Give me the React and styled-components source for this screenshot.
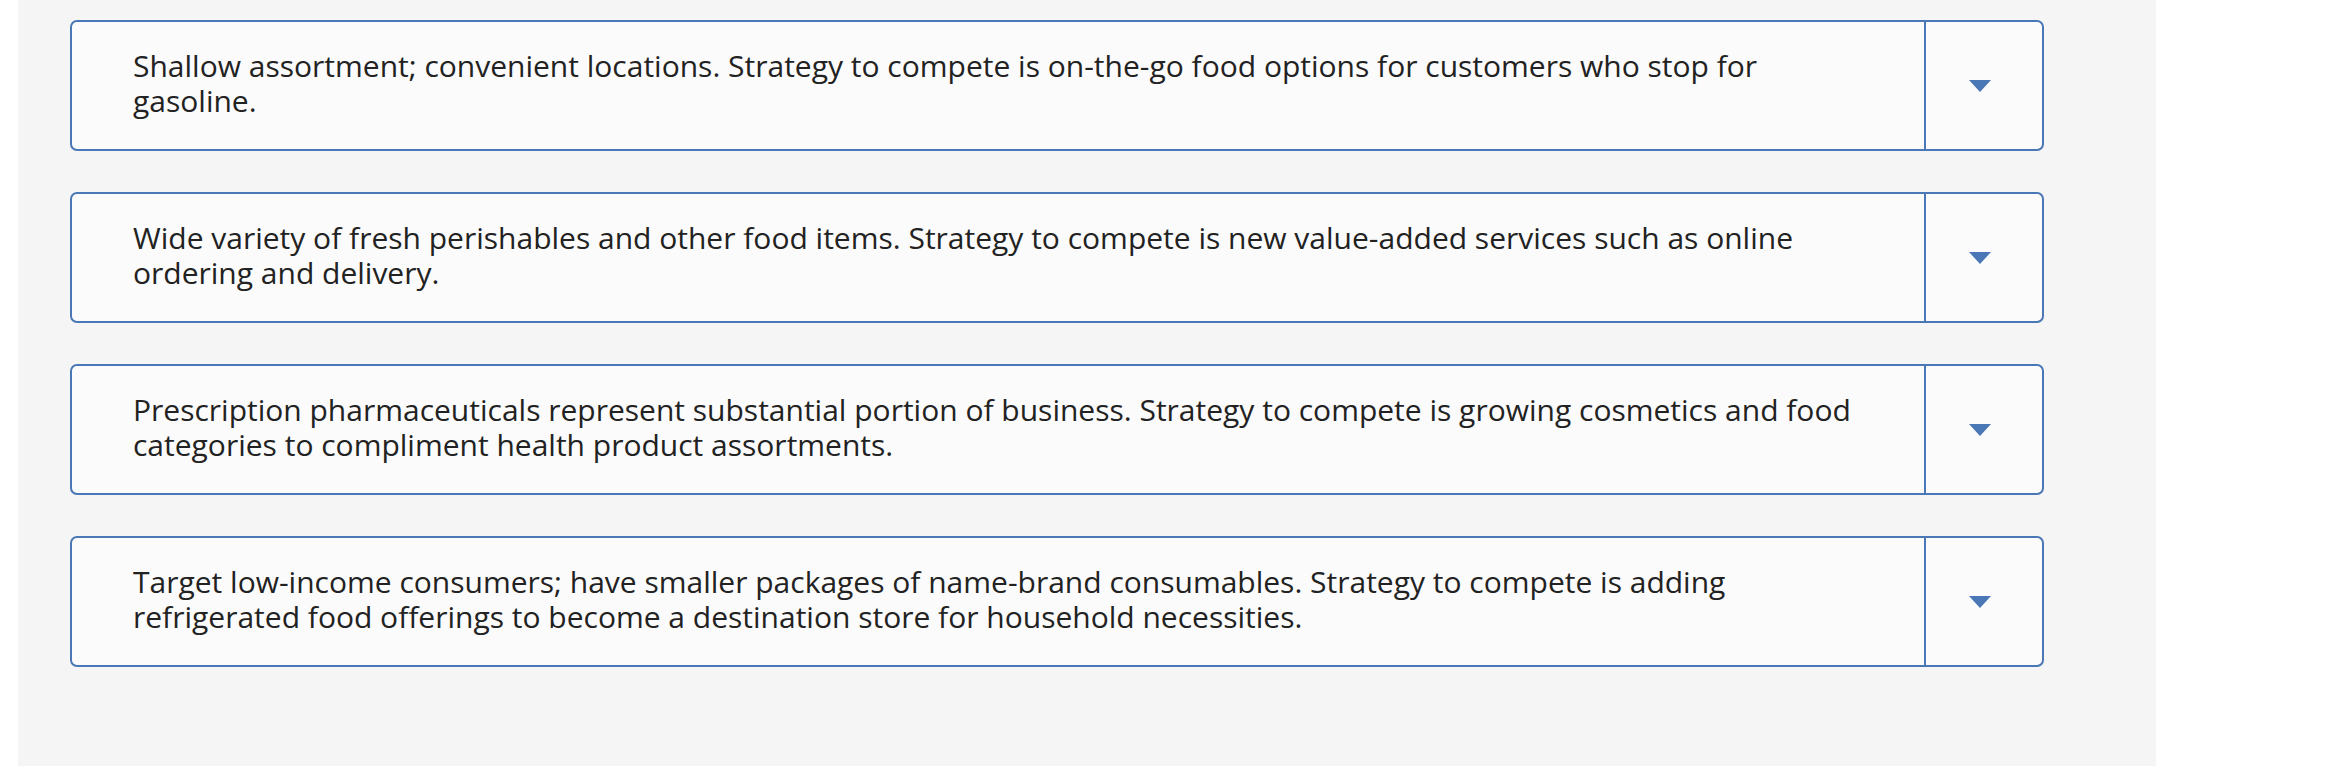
import React from 'react'
import styled, { createGlobalStyle } from 'styled-components'

const GlobalStyle = createGlobalStyle`
  html, body {
    margin: 0;
    padding: 0;
    background: #fff;
  }
  body {
    font-family: "Open Sans", Lato, sans-serif;
  }
`

const options = [
  'Shallow assortment; convenient locations. Strategy to compete is on-the-go food options for customers who stop for gasoline.',
  'Wide variety of fresh perishables and other food items. Strategy to compete is new value-added services such as online ordering and delivery.',
  'Prescription pharmaceuticals represent substantial portion of business. Strategy to compete is growing cosmetics and food categories to compliment health product assortments.',
  'Target low-income consumers; have smaller packages of name-brand consumables. Strategy to compete is adding refrigerated food offerings to become a destination store for household necessities.'
]

const Caret = () => (
  <svg width='22' height='12' viewBox='0 0 22 12'>
    <path d='M0 0 H22 L11 12 Z' fill='#4a77b5' />
  </svg>
)

const App = () => {
  return (
    <>
      <GlobalStyle />
      <StyledPanel>
        <StyledList>
          {options.map((text, i) => (
            <StyledSelect key={i}>
              <StyledText>{text}</StyledText>
              <StyledToggle>
                <Caret />
              </StyledToggle>
            </StyledSelect>
          ))}
        </StyledList>
      </StyledPanel>
    </>
  )
}

export default App

const StyledPanel = styled.div`
  margin-left: 18px;
  width: 2138px;
  min-height: 766px;
  box-sizing: border-box;
  background: #f5f5f5;
  padding: 20px 0 0 52px;
`

const StyledList = styled.div`
  display: flex;
  flex-direction: column;
  gap: 41px;
`

const StyledSelect = styled.div`
  display: grid;
  grid-template-columns: 1fr 118px;
  width: 1974px;
  height: 131px;
  box-sizing: border-box;
  border: 2px solid #4a77b5;
  border-radius: 7px;
  background: #fbfbfb;
`

const StyledText = styled.div`
  padding: 26px 55px 0 61px;
  font-size: 30px;
  line-height: 35px;
  color: #222;
`

const StyledToggle = styled.div`
  display: flex;
  align-items: center;
  justify-content: center;
  padding-right: 8px;
  border-left: 2px solid #4a77b5;
`
